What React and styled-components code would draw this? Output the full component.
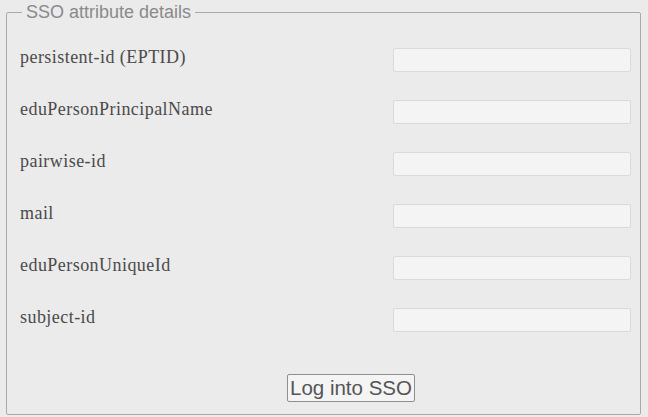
import React from 'react'
import styled, { createGlobalStyle } from 'styled-components'

const GlobalStyle = createGlobalStyle`
  html, body {
    margin: 0;
    padding: 0;
    background: #ebebeb;
  }
  body {
    width: 648px;
    height: 417px;
    overflow: hidden;
  }
`

const Fieldset = styled.fieldset`
  box-sizing: border-box;
  margin: 2px 7px 0 6px;
  height: 413px;
  padding: 0 9px 0 13px;
  border: 1px solid #a9a9a9;
  border-radius: 2px;
  display: flex;
  flex-direction: column;
`

const Legend = styled.legend`
  font-family: "Liberation Sans", Arial, sans-serif;
  font-size: 18px;
  line-height: 20px;
  color: #8a8a8a;
  padding: 0 4px;
  margin-left: 2px;
`

const Rows = styled.div`
  display: flex;
  flex-direction: column;
  gap: 28px;
  padding-top: 26px;
`

const Row = styled.div`
  display: flex;
  align-items: center;
  justify-content: space-between;
  height: 24px;
`

const Label = styled.label`
  font-family: "Liberation Serif", "Times New Roman", serif;
  font-size: 18px;
  letter-spacing: 0.45px;
  color: #4a4a4a;
  margin-top: -6px;
`

const Input = styled.input`
  box-sizing: border-box;
  width: 238px;
  height: 24px;
  margin: 0;
  background: #f4f4f4;
  border: 1px solid #dadada;
  border-radius: 2px;
  outline: none;
`

const Footer = styled.div`
  margin-top: auto;
  padding: 0 0 12px 267px;
`

const Button = styled.button`
  font-family: "Liberation Sans", Arial, sans-serif;
  font-size: 20.5px;
  color: #555;
  background: #f4f4f4;
  border: 1px solid #8f8f8f;
  border-radius: 2px;
  height: 28px;
  padding: 0 2px;
  line-height: 24px;
`

const attributes = [
  'persistent-id (EPTID)',
  'eduPersonPrincipalName',
  'pairwise-id',
  'mail',
  'eduPersonUniqueId',
  'subject-id',
]

export default function App() {
  return (
    <>
      <GlobalStyle />
      <Fieldset>
        <Legend>SSO attribute details</Legend>
        <Rows>
          {attributes.map(name => (
            <Row key={name}>
              <Label>{name}</Label>
              <Input type='text' />
            </Row>
          ))}
        </Rows>
        <Footer>
          <Button>Log into SSO</Button>
        </Footer>
      </Fieldset>
    </>
  )
}
